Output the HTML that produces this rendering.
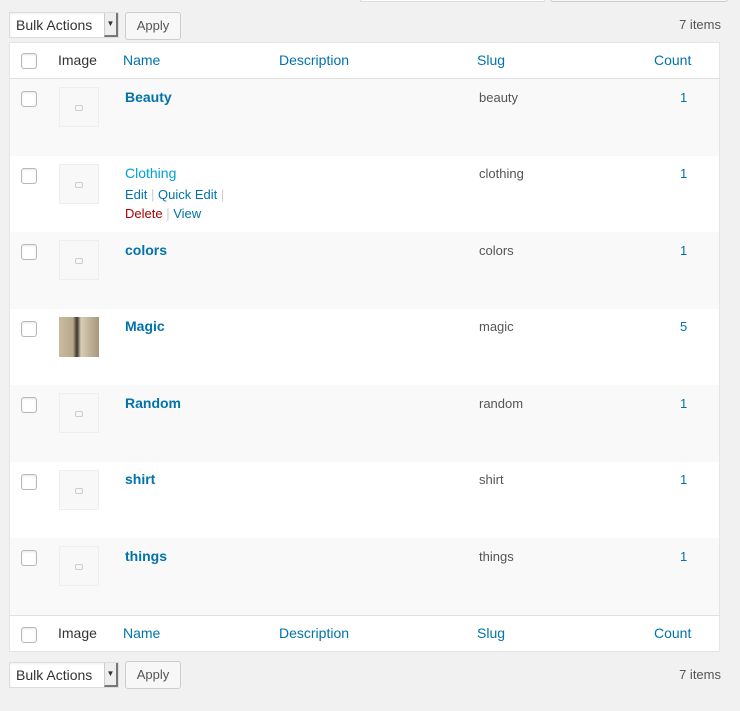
<!DOCTYPE html><html><head><style>
body{margin:0;background:#f1f1f1;font-family:"Liberation Sans",sans-serif;font-size:13px;color:#333;width:740px;height:711px;overflow:hidden;position:relative}
.a{position:absolute}
.sel{border:1px solid #ddd;background:#fff;height:26px;box-sizing:border-box;box-shadow:inset 0 1px 2px rgba(0,0,0,.07)}
.btn{border:1px solid #ccc;background:#f7f7f7;border-radius:3px;height:28px;box-sizing:border-box;font-size:13px;line-height:26px;text-align:center;color:#555}
.cb{position:absolute;width:14px;height:14px;border:1px solid #b4b9be;border-radius:3px;background:#fff;box-shadow:inset 0 1px 2px rgba(0,0,0,.1)}
.th{position:absolute;font-size:14px;color:#0073aa}
.row{position:absolute;left:10px;width:709px}
.ph{position:absolute;left:49px;width:38px;height:38px;border:1px solid #eee;background:#f8f8f8}
.ph:after{content:"";position:absolute;left:15px;top:17px;width:6px;height:4px;border:1px solid #ccc;border-radius:2px}
.nm{position:absolute;left:115px;font-weight:bold;font-size:14px;color:#0073aa}
.sl{position:absolute;left:469px;color:#555}
.ct{position:absolute;left:670px;color:#0073aa}
</style></head><body>
<div class="a sel" style="left:360px;top:-6px;width:185px;height:8px"></div>
<div class="a btn" style="left:550px;top:-6px;width:178px;height:8px"></div>

<div class="a sel" style="left:9px;top:12px;width:110px;font-size:14px;line-height:24px;padding-left:6px">Bulk Actions<span class="a" style="right:0;top:0;width:14px;height:24px;background:#eee;border-left:1px solid #ccc;border-right:2px solid #777;border-bottom:2px solid #777;box-sizing:border-box;font-size:8px;line-height:22px;text-align:center">▼</span></div>
<div class="a btn" style="left:125px;top:12px;width:56px">Apply</div>
<div class="a" style="right:19px;top:17px;color:#555">7 items</div>

<div class="a" style="left:9px;top:42px;width:711px;height:610px;background:#fff;border:1px solid #e5e5e5;box-sizing:border-box"></div>
<div class="a" style="left:9px;top:78px;width:711px;height:1px;background:#e1e1e1"></div>
<div class="a" style="left:9px;top:615px;width:711px;height:1px;background:#e1e1e1"></div>

<div class="row" style="top:79px;height:77px;background:#f9f9f9"></div>
<div class="row" style="top:232px;height:77px;background:#f9f9f9"></div>
<div class="row" style="top:385px;height:77px;background:#f9f9f9"></div>
<div class="row" style="top:538px;height:77px;background:#f9f9f9"></div>

<div class="cb" style="left:21px;top:53px"></div>
<div class="th" style="left:58px;top:52px;color:#333">Image</div>
<div class="th" style="left:123px;top:52px">Name</div>
<div class="th" style="left:279px;top:52px">Description</div>
<div class="th" style="left:477px;top:52px">Slug</div>
<div class="th" style="left:654px;top:52px">Count</div>

<div class="row" style="top:79px">
<div class="cb" style="left:11px;top:12px"></div><div class="ph" style="top:8px"></div>
<div class="nm" style="top:10px">Beauty</div><div class="sl" style="top:11px">beauty</div><div class="ct" style="top:11px">1</div></div>
<div class="row" style="top:156px">
<div class="cb" style="left:11px;top:12px"></div><div class="ph" style="top:8px"></div>
<div class="nm" style="top:9px;font-weight:normal;color:#00a0d2">Clothing</div>
<div class="a" style="left:115px;top:31px;color:#0073aa">Edit <span style="color:#ccc">|</span> Quick Edit <span style="color:#ccc">|</span></div>
<div class="a" style="left:115px;top:50px;color:#0073aa"><span style="color:#a00">Delete</span> <span style="color:#ccc">|</span> View</div>
<div class="sl" style="top:10px">clothing</div><div class="ct" style="top:10px">1</div></div>
<div class="row" style="top:232px">
<div class="cb" style="left:11px;top:12px"></div><div class="ph" style="top:8px"></div>
<div class="nm" style="top:10px">colors</div><div class="sl" style="top:11px">colors</div><div class="ct" style="top:11px">1</div></div>
<div class="row" style="top:309px">
<div class="cb" style="left:11px;top:12px"></div>
<div class="a" style="left:49px;top:8px;width:40px;height:40px;background:linear-gradient(90deg,#c9bba0 0,#b8a88a 35%,#3a332c 45%,#d8cdb5 55%,#a8977a 100%)"></div>
<div class="nm" style="top:9px">Magic</div><div class="sl" style="top:10px">magic</div><div class="ct" style="top:10px">5</div></div>
<div class="row" style="top:385px">
<div class="cb" style="left:11px;top:12px"></div><div class="ph" style="top:8px"></div>
<div class="nm" style="top:10px">Random</div><div class="sl" style="top:11px">random</div><div class="ct" style="top:11px">1</div></div>
<div class="row" style="top:462px">
<div class="cb" style="left:11px;top:12px"></div><div class="ph" style="top:8px"></div>
<div class="nm" style="top:9px">shirt</div><div class="sl" style="top:10px">shirt</div><div class="ct" style="top:10px">1</div></div>
<div class="row" style="top:538px">
<div class="cb" style="left:11px;top:12px"></div><div class="ph" style="top:8px"></div>
<div class="nm" style="top:10px">things</div><div class="sl" style="top:11px">things</div><div class="ct" style="top:11px">1</div></div>

<div class="cb" style="left:21px;top:627px"></div>
<div class="th" style="left:58px;top:625px;color:#333">Image</div>
<div class="th" style="left:123px;top:625px">Name</div>
<div class="th" style="left:279px;top:625px">Description</div>
<div class="th" style="left:477px;top:625px">Slug</div>
<div class="th" style="left:654px;top:625px">Count</div>

<div class="a sel" style="left:9px;top:662px;width:110px;font-size:14px;line-height:24px;padding-left:6px">Bulk Actions<span class="a" style="right:0;top:0;width:14px;height:24px;background:#eee;border-left:1px solid #ccc;border-right:2px solid #777;border-bottom:2px solid #777;box-sizing:border-box;font-size:8px;line-height:22px;text-align:center">▼</span></div>
<div class="a btn" style="left:125px;top:661px;width:56px">Apply</div>
<div class="a" style="right:19px;top:667px;color:#555">7 items</div>
</body></html>
